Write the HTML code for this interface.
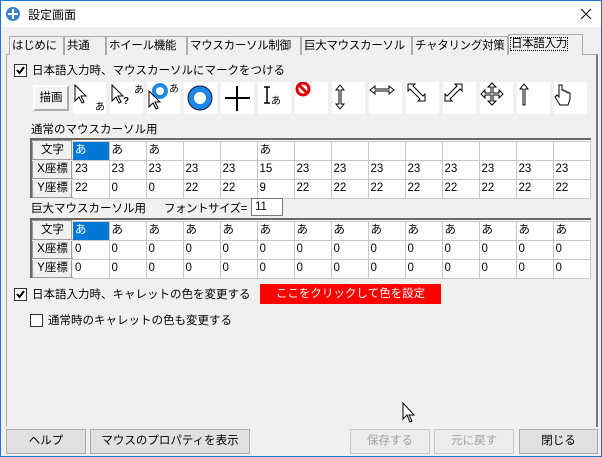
<!DOCTYPE html>
<html><head><meta charset="utf-8"><style>
*{box-sizing:border-box;margin:0;padding:0}
body{width:602px;height:457px;overflow:hidden;background:#f0f0f0;font-family:"Liberation Sans","Noto Sans CJK JP",sans-serif;font-size:11.5px;color:#000;position:relative}
.win{position:absolute;left:0;top:0;width:602px;height:457px;border:1px solid #1979ca;background:#f0f0f0}
.title{position:absolute;left:0;top:0;width:600px;height:26px;background:#fff}
.abs{position:absolute;white-space:nowrap}
.tab{position:absolute;top:35px;height:19px;border:1px solid #adadad;border-bottom:none;background:#f0f0f0;padding:1px 2px;line-height:16px;white-space:nowrap;overflow:hidden;letter-spacing:-0.3px}
.panel{position:absolute;left:5px;top:53px;width:592px;height:373px;border:1px solid #adadad;border-right:2px solid #7a7a7a;border-bottom:none;background:#f0f0f0}
.cb{position:absolute;width:13px;height:13px;border:1px solid #333;background:#fff}
.box{position:absolute;top:81px;width:33px;height:32px;background:#fff}
table{position:absolute;border-collapse:collapse;background:#fff;table-layout:fixed}
td{border:1px solid #c6c6c6;width:37px;height:19px;padding:0 2px;font-size:11.5px;line-height:17px;vertical-align:middle;white-space:nowrap;overflow:hidden}
td.h{width:39px;background:#f0f0f0;border:2px outset #eee;text-align:center;padding:0}
td.sel{background:#0078d7;color:#fff}
.grid{position:absolute;border-top:2px solid #696969;border-left:2px solid #696969}
.btn{position:absolute;top:428px;height:25px;border:1px solid #adadad;background:#e1e1e1;text-align:center;line-height:23px;white-space:nowrap}
</style></head><body><div class="win">
<div class="title">
<svg class="abs" style="left:4px;top:5px" width="16" height="16"><circle cx="8" cy="8" r="7" fill="#3a7fd0"/><path d="M8 3v10M3 8h10" stroke="#fff" stroke-width="2"/></svg>
<div class="abs" style="left:27px;top:5px;font-size:12px">設定画面</div>
<svg class="abs" style="left:579px;top:7px" width="12" height="12"><path d="M1 1L11 11M11 1L1 11" stroke="#000" stroke-width="1"/></svg>
</div>
<div class="panel"></div>
<div class="tab" style="left:8px;width:55px">はじめに</div>
<div class="tab" style="left:63px;width:42px">共通</div>
<div class="tab" style="left:105px;width:81px">ホイール機能</div>
<div class="tab" style="left:186px;width:114px">マウスカーソル制御</div>
<div class="tab" style="left:300px;width:111px">巨大マウスカーソル</div>
<div class="tab" style="left:411px;width:96px">チャタリング対策</div>
<div class="tab" style="left:507px;top:33px;height:21px;width:75px;border-bottom:none"><span style="outline:1px dotted #000">日本語入力</span></div>

<div class="cb" style="left:13px;top:63px"><svg width="11" height="11"><path d="M2 5l2.5 3L9 2" stroke="#000" stroke-width="2" fill="none"/></svg></div>
<div class="abs" style="left:31px;top:61px">日本語入力時、マウスカーソルにマークをつける</div>

<div class="abs" style="left:32px;top:84px;width:36px;height:26px;border:2px outset #fff;background:#f4f4f4;text-align:center;line-height:22px">描画</div>
<div class="box" style="left:72px"><svg width="33" height="32"><path d="M2 3v16l4-4 3 6 2-1-3-6h5z" fill="#fff" stroke="#000"/><text x="22" y="28" font-size="10">あ</text></svg></div>
<div class="box" style="left:109px"><svg width="33" height="32"><path d="M2 3v16l4-4 3 6 2-1-3-6h5z" fill="#fff" stroke="#000"/><text x="13" y="22" font-size="10" font-weight="bold">?</text><text x="24" y="11" font-size="10">あ</text></svg></div>
<div class="box" style="left:146px"><svg width="33" height="32"><circle cx="13" cy="9" r="6" fill="none" stroke="#1e88e5" stroke-width="4"/><path d="M2 9v16l4-4 3 6 2-1-3-6h5z" fill="#fff" stroke="#000"/><text x="22" y="10" font-size="10">あ</text></svg></div>
<div class="box" style="left:183px"><svg width="33" height="32"><circle cx="16" cy="16" r="9" fill="none" stroke="#1e88e5" stroke-width="6"/><circle cx="16" cy="16" r="12" fill="none" stroke="#114" stroke-width="1"/></svg></div>
<div class="box" style="left:220px"><svg width="33" height="32"><path d="M16 4v25M4 16h25" stroke="#000" stroke-width="2"/></svg></div>
<div class="box" style="left:257px"><svg width="33" height="32"><path d="M6 5h6M9 5v16M6 21h6" stroke="#000" stroke-width="1.5"/><text x="13" y="22" font-size="10">あ</text></svg></div>
<div class="box" style="left:294px"><svg width="33" height="32"><circle cx="8" cy="7" r="6" fill="none" stroke="#d00" stroke-width="3"/><path d="M4 3l8 8" stroke="#d00" stroke-width="3"/></svg></div>
<div class="box" style="left:331px"><svg width="33" height="32"><path d="M8 3l-4 5h3v14h-3l4 5 4-5h-3v-14h3z" fill="#fff" stroke="#000"/></svg></div>
<div class="box" style="left:368px"><svg width="33" height="32"><path d="M1 8l5-4v3h14v-3l5 4-5 4v-3h-14v3z" fill="#fff" stroke="#000"/></svg></div>
<div class="box" style="left:405px"><svg width="33" height="32"><path d="M2 2h7l-2 2 10 10 2-2v7h-7l2-2-10-10-2 2z" fill="#fff" stroke="#000"/></svg></div>
<div class="box" style="left:442px"><svg width="33" height="32"><path d="M19 2h-7l2 2-10 10-2-2v7h7l-2-2 10-10 2 2z" fill="#fff" stroke="#000"/></svg></div>
<div class="box" style="left:479px"><svg width="33" height="32"><path d="M12 1l-4 4h3v6h-6v-3l-4 4 4 4v-3h6v6h-3l4 4 4-4h-3v-6h6v3l4-4-4-4v3h-6v-6h3z" fill="#fff" stroke="#000"/></svg></div>
<div class="box" style="left:516px"><svg width="33" height="32"><path d="M4 2l-4 5h3v16h2v-16h3z" fill="#fff" stroke="#000" transform="translate(3,0)"/></svg></div>
<div class="box" style="left:553px"><svg width="33" height="32"><path d="M5 3v12l-2-2-2 2 5 8h8l2-6v-6h-2v-1h-2v-1h-2v-1h-2v-5z" fill="#fff" stroke="#000"/></svg></div>

<div class="abs" style="left:30px;top:120px">通常のマウスカーソル用</div>
<div class="grid" style="left:29px;top:137px;width:561px;height:60px">
<table style="left:0;top:0"><tr><td class="h">文字</td><td class="sel">あ</td><td>あ</td><td>あ</td><td></td><td></td><td>あ</td><td></td><td></td><td></td><td></td><td></td><td></td><td></td><td></td></tr>
<tr><td class="h">X座標</td><td>23</td><td>23</td><td>23</td><td>23</td><td>23</td><td>15</td><td>23</td><td>23</td><td>23</td><td>23</td><td>23</td><td>23</td><td>23</td><td>23</td></tr>
<tr><td class="h">Y座標</td><td>22</td><td>0</td><td>0</td><td>22</td><td>22</td><td>9</td><td>22</td><td>22</td><td>22</td><td>22</td><td>22</td><td>22</td><td>22</td><td>22</td></tr></table></div>

<div class="abs" style="left:30px;top:199px">巨大マウスカーソル用</div>
<div class="abs" style="left:163px;top:199px;letter-spacing:-0.5px">フォントサイズ=</div>
<div class="abs" style="left:250px;top:197px;width:32px;height:18px;border:1px solid #7a7a7a;background:#fff;padding-left:3px;line-height:16px">11</div>
<div class="grid" style="left:29px;top:217px;width:561px;height:60px">
<table style="left:0;top:0"><tr><td class="h">文字</td><td class="sel">あ</td><td>あ</td><td>あ</td><td>あ</td><td>あ</td><td>あ</td><td>あ</td><td>あ</td><td>あ</td><td>あ</td><td>あ</td><td>あ</td><td>あ</td><td>あ</td></tr>
<tr><td class="h">X座標</td><td>0</td><td>0</td><td>0</td><td>0</td><td>0</td><td>0</td><td>0</td><td>0</td><td>0</td><td>0</td><td>0</td><td>0</td><td>0</td><td>0</td></tr>
<tr><td class="h">Y座標</td><td>0</td><td>0</td><td>0</td><td>0</td><td>0</td><td>0</td><td>0</td><td>0</td><td>0</td><td>0</td><td>0</td><td>0</td><td>0</td><td>0</td></tr></table></div>

<div class="cb" style="left:13px;top:287px"><svg width="11" height="11"><path d="M2 5l2.5 3L9 2" stroke="#000" stroke-width="2" fill="none"/></svg></div>
<div class="abs" style="left:31px;top:285px">日本語入力時、キャレットの色を変更する</div>
<div class="abs" style="left:259px;top:283px;width:181px;height:20px;background:#f00;color:#fff;text-align:center;line-height:20px">ここをクリックして色を設定</div>
<div class="cb" style="left:29px;top:313px"></div>
<div class="abs" style="left:47px;top:311px">通常時のキャレットの色も変更する</div>

<svg class="abs" style="left:401px;top:401px" width="14" height="22"><path d="M1 1v16l4-4 3 7 2-1-3-6h5z" fill="#fff" stroke="#000"/></svg>

<div class="btn" style="left:5px;width:80px">ヘルプ</div>
<div class="btn" style="left:89px;width:160px">マウスのプロパティを表示</div>
<div class="btn" style="left:349px;width:80px;color:#a0a0a0;background:#ececec;border-color:#c8c8c8">保存する</div>
<div class="btn" style="left:433px;width:80px;color:#a0a0a0;background:#ececec;border-color:#c8c8c8">元に戻す</div>
<div class="btn" style="left:518px;width:79px">閉じる</div>
</div></body></html>
